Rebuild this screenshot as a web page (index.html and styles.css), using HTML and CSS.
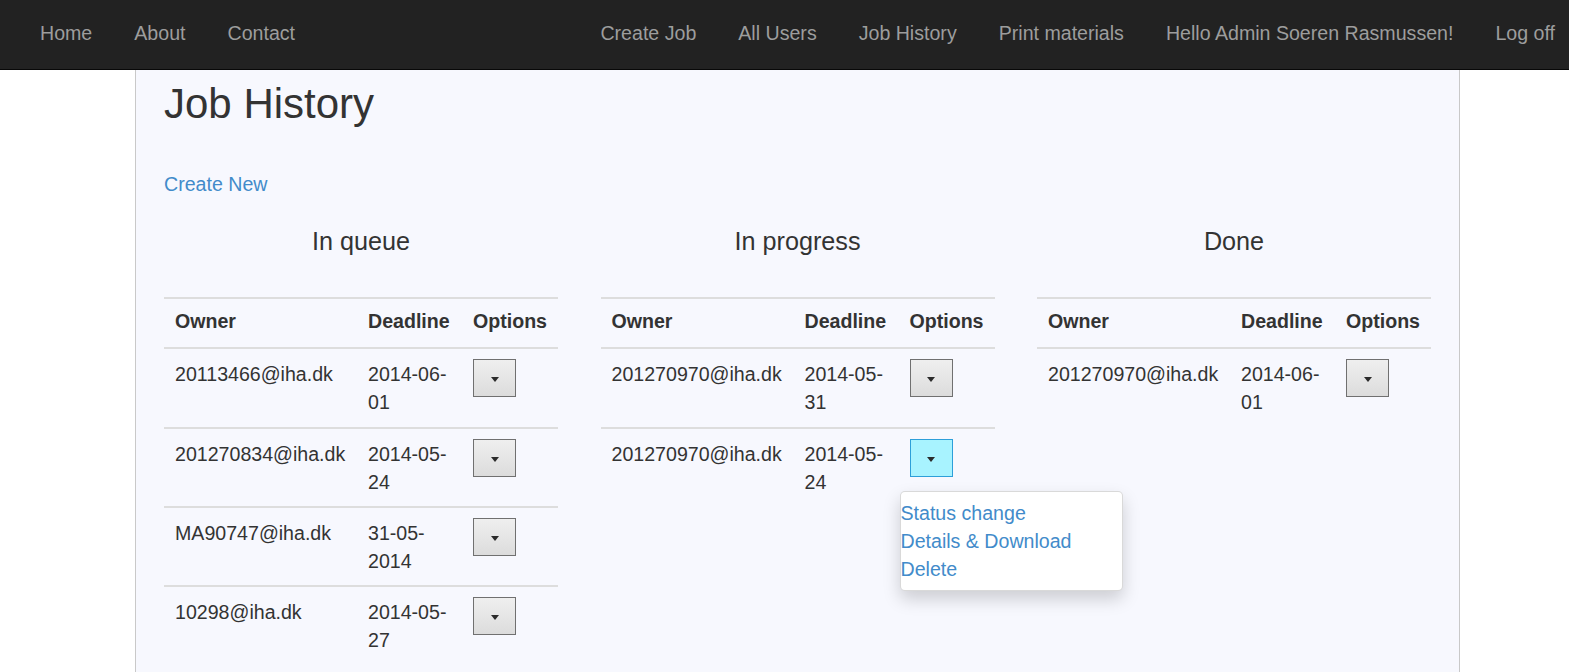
FILE: index.html
```html
<!DOCTYPE html>
<html lang="en">
<head>
<meta charset="utf-8">
<title>Job History</title>
<link rel="stylesheet" href="styles.css">
</head>
<body>
<nav class="navbar">
  <ul class="nav">
    <li><a href="#">Home</a></li>
    <li><a href="#">About</a></li>
    <li><a href="#">Contact</a></li>
  </ul>
  <ul class="nav nav-right">
    <li><a href="#">Create Job</a></li>
    <li><a href="#">All Users</a></li>
    <li><a href="#">Job History</a></li>
    <li><a href="#">Print materials</a></li>
    <li><a href="#">Hello Admin Soeren Rasmussen!</a></li>
    <li class="last"><a href="#">Log off</a></li>
  </ul>
</nav>

<main class="container">
  <h1 class="title">Job History</h1>
  <p class="create"><a href="#">Create New</a></p>

  <div class="columns">
    <section class="col">
      <h3 class="col-title">In queue</h3>
      <table class="jobs">
        <thead>
          <tr><th class="c-owner">Owner</th><th class="c-date">Deadline</th><th class="c-opt">Options</th></tr>
        </thead>
        <tbody>
          <tr><td>20113466@iha.dk</td><td>2014-06-<wbr>01</td><td><div class="dd"><button class="dd-btn"><span class="caret"></span></button></div></td></tr>
          <tr><td>201270834@iha.dk</td><td>2014-05-<wbr>24</td><td><div class="dd"><button class="dd-btn"><span class="caret"></span></button></div></td></tr>
          <tr><td>MA90747@iha.dk</td><td>31-05-<wbr>2014</td><td><div class="dd"><button class="dd-btn"><span class="caret"></span></button></div></td></tr>
          <tr><td>10298@iha.dk</td><td>2014-05-<wbr>27</td><td><div class="dd"><button class="dd-btn"><span class="caret"></span></button></div></td></tr>
        </tbody>
      </table>
    </section>

    <section class="col">
      <h3 class="col-title">In progress</h3>
      <table class="jobs">
        <thead>
          <tr><th class="c-owner">Owner</th><th class="c-date">Deadline</th><th class="c-opt">Options</th></tr>
        </thead>
        <tbody>
          <tr><td>201270970@iha.dk</td><td>2014-05-<wbr>31</td><td><div class="dd"><button class="dd-btn"><span class="caret"></span></button></div></td></tr>
          <tr><td>201270970@iha.dk</td><td>2014-05-<wbr>24</td><td>
            <div class="dd">
              <button class="dd-btn active"><span class="caret"></span></button>
              <ul class="dd-menu">
                <li><a href="#">Status change</a></li>
                <li><a href="#">Details &amp; Download</a></li>
                <li><a href="#">Delete</a></li>
              </ul>
            </div>
          </td></tr>
        </tbody>
      </table>
    </section>

    <section class="col">
      <h3 class="col-title">Done</h3>
      <table class="jobs">
        <thead>
          <tr><th class="c-owner">Owner</th><th class="c-date">Deadline</th><th class="c-opt">Options</th></tr>
        </thead>
        <tbody>
          <tr><td>201270970@iha.dk</td><td>2014-06-<wbr>01</td><td><div class="dd"><button class="dd-btn"><span class="caret"></span></button></div></td></tr>
        </tbody>
      </table>
    </section>
  </div>
</main>
</body>
</html>
```

FILE: styles.css
```css
* { box-sizing: border-box; }

html, body {
  margin: 0;
  padding: 0;
  background: #fff;
  overflow: hidden;
}

body {
  font-family: "Liberation Sans", Arial, sans-serif;
  font-size: 19.6px;
  line-height: 28px;
  color: #333;
}

a { color: #428bca; text-decoration: none; }

/* Navbar */
.navbar {
  display: flex;
  height: 70px;
  background: #222;
  border-bottom: 1px solid #080808;
  padding-left: 19px;
}

.nav {
  display: flex;
  list-style: none;
  margin: 0;
  padding: 0;
}

.nav a {
  display: block;
  padding: 19px 21px 22px;
  line-height: 28px;
  color: #9d9d9d;
}

.nav-right { margin-left: auto; }
.nav-right .last a { padding-right: 14px; }

/* Container */
.container {
  display: flow-root;
  margin-left: 135px;
  width: 1325px;
  min-height: calc(100vh - 70px);
  background: #f7f8fe;
  border-left: 1px solid #c9c9c9;
  border-right: 1px solid #c9c9c9;
  padding: 0 28px 20px;
}

.title {
  margin: 11px 0 0;
  font-size: 42px;
  line-height: 46px;
  font-weight: 400;
}

.create {
  margin: 43px 0 0;
}

.columns {
  display: grid;
  grid-template-columns: 1fr 1fr 1fr;
  column-gap: 42.5px;
}

.col-title {
  margin: 29px 0 0;
  font-size: 25.2px;
  line-height: 28px;
  font-weight: 400;
  text-align: center;
}

/* Tables */
.jobs {
  width: 100%;
  margin-top: 42px;
  border-collapse: collapse;
  table-layout: fixed;
}

.jobs th, .jobs td {
  text-align: left;
  vertical-align: top;
  padding: 11px 11px 10px;
  line-height: 28px;
}

.jobs th {
  font-weight: 700;
  padding: 8px 11px 12px;
  border-top: 2px solid #dddddd;
  border-bottom: 2px solid #dddddd;
  white-space: nowrap;
}

.jobs td { border-top: 2px solid #dddddd; }
.jobs tbody tr:first-child td { border-top: 0; padding-bottom: 11px; }

.c-owner { width: 193px; }
.c-date { width: 105px; }

/* Dropdown */
.dd {
  position: relative;
  width: 43px;
}

.dd-btn {
  display: flex;
  align-items: center;
  justify-content: center;
  width: 43px;
  height: 38px;
  margin-top: -1px;
  padding: 0;
  border: 1px solid #707070;
  background: linear-gradient(#efefef, #dcdcdc);
  cursor: pointer;
}

.dd-btn.active {
  background: #a8f3ff;
  border-color: #2d9fd9;
}

.caret {
  display: block;
  width: 0;
  height: 0;
  margin-top: 3px;
  border-top: 5px solid #2b2b2b;
  border-left: 4.5px solid transparent;
  border-right: 4.5px solid transparent;
}

.dd-menu {
  position: absolute;
  top: 52px;
  left: -10px;
  z-index: 10;
  width: 223px;
  margin: 0;
  padding: 7px 0;
  list-style: none;
  background: #fff;
  border: 1px solid rgba(0, 0, 0, 0.15);
  border-radius: 5px;
  box-shadow: 0 8px 17px rgba(0, 0, 0, 0.175);
}

.dd-menu a {
  display: block;
  line-height: 28px;
  color: #428bca;
  white-space: nowrap;
}
```
